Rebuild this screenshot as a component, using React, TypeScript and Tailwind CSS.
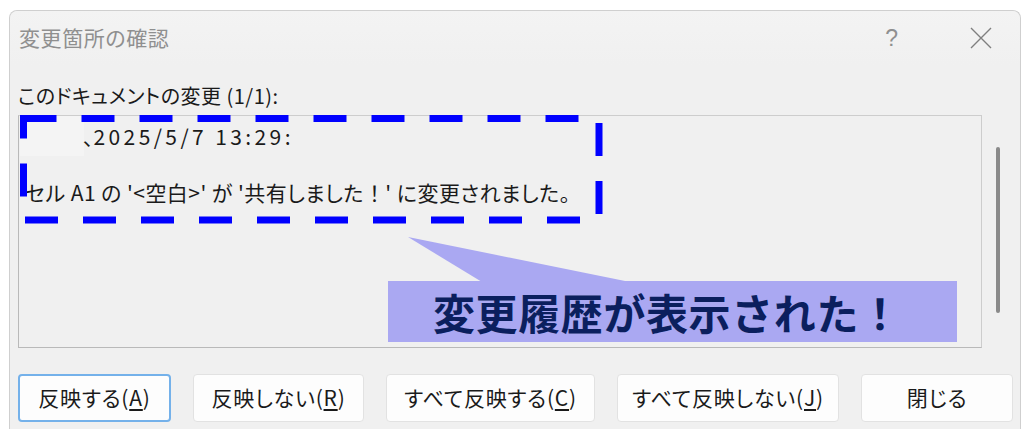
import React from 'react';

const jp = "font-['Noto_Sans_CJK_JP','Noto_Sans',sans-serif]";
const palt = "[font-feature-settings:'palt']";

const Accel: React.FC<{ label: string; k: string }> = ({ label, k }) => (
  <span>
    {label}(<span className="underline underline-offset-[3px]">{k}</span>)
  </span>
);

export default function App() {
  return (
    <div className={`relative w-[1024px] h-[433px] bg-white overflow-hidden ${jp}`}>
      {/* Dialog */}
      <div className={`ml-[9px] mt-[10px] w-[1012px] h-[419px] border border-b-0 border-[#cfcfcf] rounded-t-[8px] bg-[#f0f0f0] flex flex-col ${palt}`}>
        {/* Title bar */}
        <div className="h-[54px] rounded-t-[8px] bg-gradient-to-b from-[#f3f3f3] to-[#f0f0f0] flex items-center pl-[9px] pr-[28px]">
          <span className="text-[21px] text-[#8f8f8f] tracking-[0.6px]">変更箇所の確認</span>
          <span className="ml-auto mr-[72px] text-[23px] font-light text-[#8f8f8f] font-['Liberation_Sans',sans-serif]">?</span>
          <svg width="22" height="22" viewBox="0 0 22 22" className="text-[#7f7f7f]">
            <path d="M1 1L21 21M21 1L1 21" stroke="currentColor" strokeWidth="1.4" />
          </svg>
        </div>

        {/* Body */}
        <div className="pl-[8px] flex flex-col">
          <div className="mt-[18px] h-[26px] leading-[26px] text-[20px] text-[#1a1a1a] tracking-[0.5px]">
            このドキュメントの変更 (1/1):
          </div>

          <div className="mt-[6px] flex">
            <div className="w-[964px] h-[233px] border border-[#b9b9b9] border-r-[#cdcdcd] border-t-[#cdcdcd] pt-[6px] text-[21px] text-[#1a1a1a]">
              <div className="h-[28px] leading-[28px] flex items-center">
                <span className="ml-[1px] w-[64px] h-[40px] bg-[#f4f4f4]" />
                <span className="-ml-[1px]">、</span>
                <span className="tracking-[3.4px]">2025/5/7 13:29:</span>
              </div>
              <div className="h-[28px]" />
              <div className="h-[28px] leading-[28px] whitespace-nowrap pl-[6px] tracking-[0.45px]">
                セル A1 の '&lt;空白&gt;' が '共有しました
                <span className="[font-feature-settings:normal]">！</span>' に変更されました。
              </div>
            </div>
            <div className="ml-[14px] mt-[32px] w-[4px] h-[166px] rounded-full bg-[#8a8a8a]" />
          </div>

          <div className="mt-[26px] flex gap-[22px] text-[21px] text-[#1a1a1a] tracking-[0.8px]">
            <button className="w-[153px] h-[48px] rounded-[4px] border-2 border-[#74b1ea] bg-[#fdfdfd]">
              <Accel label="反映する" k="A" />
            </button>
            <button className="w-[171px] h-[48px] rounded-[4px] border border-[#e2e2e2] bg-[#fdfdfd]">
              <Accel label="反映しない" k="R" />
            </button>
            <button className="w-[209px] h-[48px] rounded-[4px] border border-[#e2e2e2] bg-[#fdfdfd]">
              <Accel label="すべて反映する" k="C" />
            </button>
            <button className="w-[222px] h-[48px] rounded-[4px] border border-[#e2e2e2] bg-[#fdfdfd]">
              <Accel label="すべて反映しない" k="J" />
            </button>
            <button className="w-[152px] h-[48px] rounded-[4px] border border-[#e2e2e2] bg-[#fdfdfd]">
              閉じる
            </button>
          </div>
        </div>
      </div>

      {/* Annotation: dashed highlight */}
      <svg className="absolute left-0 top-0 pointer-events-none" width="1024" height="433">
        <rect
          x="23.5"
          y="118.5"
          width="575.5"
          height="101.5"
          fill="none"
          stroke="#0000ff"
          strokeWidth="7"
          strokeDasharray="33 25"
        />
        <polygon points="408,237 482,282 630,282" fill="#aaa8f2" />
      </svg>

      {/* Annotation: callout */}
      <div className="absolute left-[388px] top-[281px] w-[569px] h-[61px] bg-[#aaa8f2] flex items-center pl-[45px]">
        <span className="text-[42px] tracking-[0.6px] font-bold leading-none text-[#0b1f5e] whitespace-nowrap">
          変更履歴が表示された！
        </span>
      </div>
    </div>
  );
}
